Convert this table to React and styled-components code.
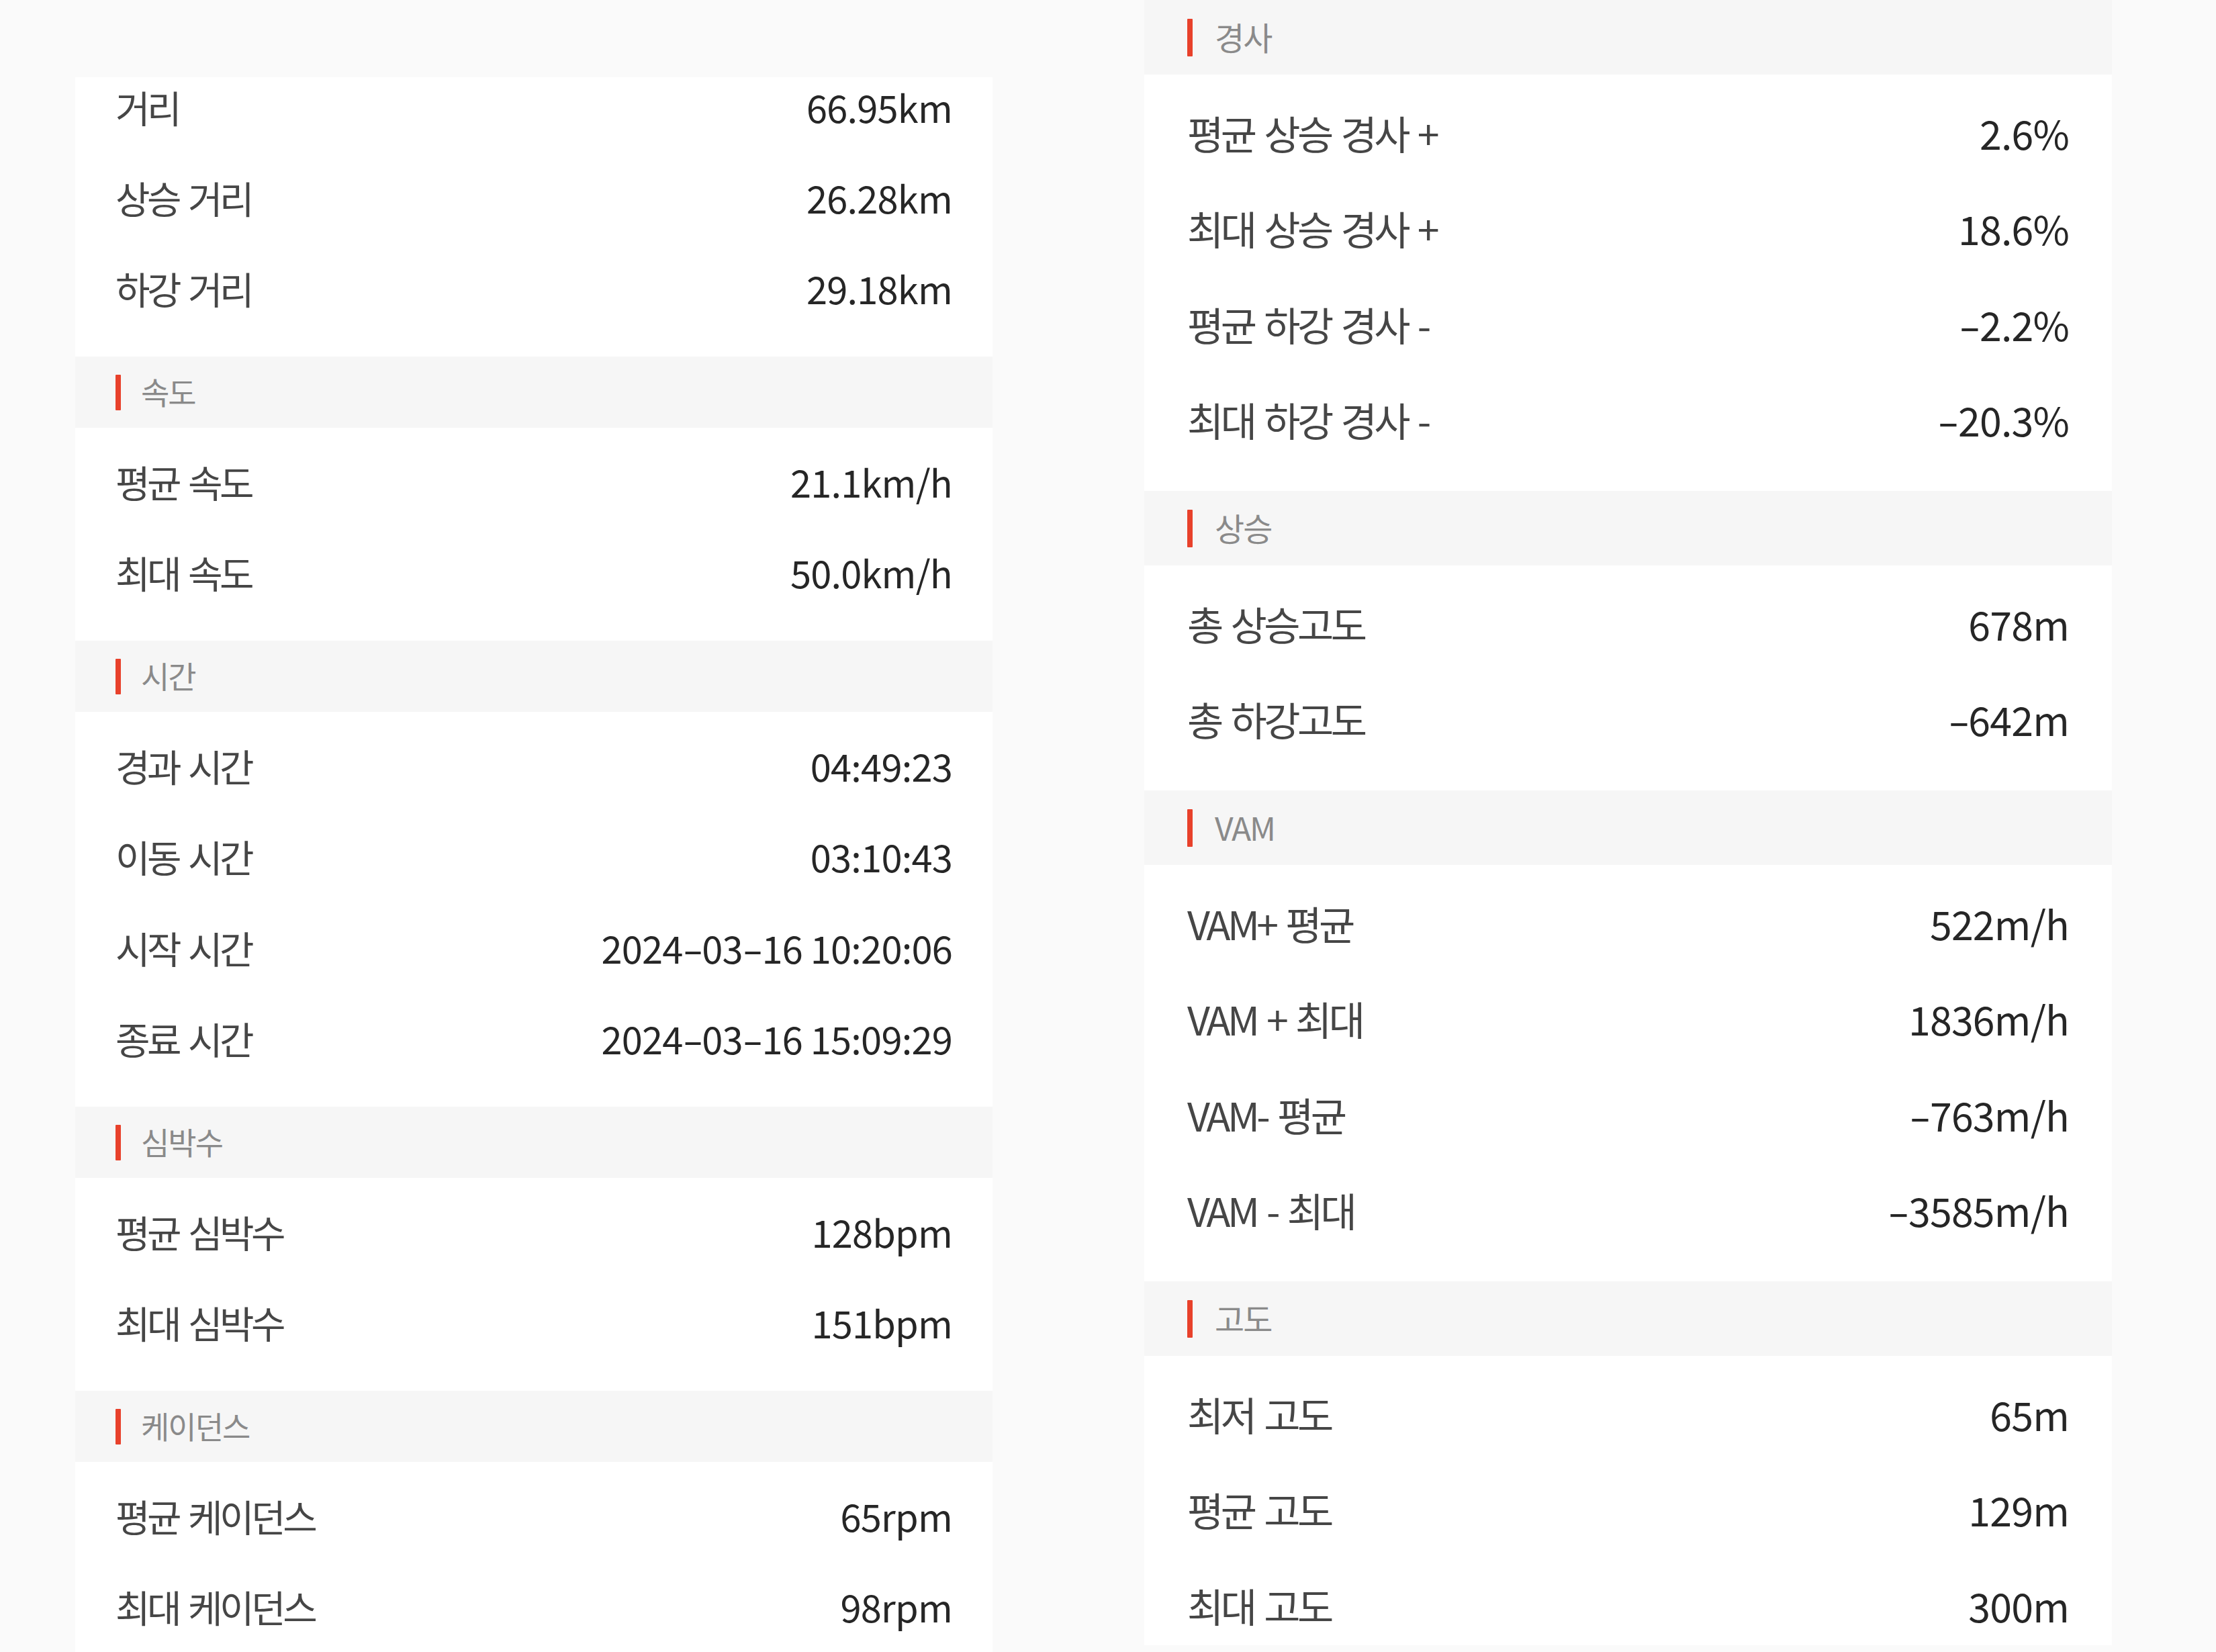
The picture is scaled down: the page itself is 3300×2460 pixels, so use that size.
import React from "react";
import styled, { createGlobalStyle, ThemeProvider } from "styled-components";

const GlobalStyle = createGlobalStyle`
  html, body {
    margin: 0;
    padding: 0;
    background: #fafafa;
  }
  body {
    font-family: "Noto Sans CJK KR", "Noto Sans", sans-serif;
  }
  #root {
    height: 2460px;
    overflow: hidden;
  }
`;

const leftTheme = {
  pad: 60,
  row: 135.5,
  head: 106,
  pt: 16,
  pb: 30,
  font: 56,
  headFont: 46,
  barW: 8,
  barH: 53,
  barGap: 30,
};

const rightTheme = {
  pad: 64,
  row: 142.5,
  head: 111,
  pt: 19,
  pb: 31,
  font: 59,
  headFont: 48,
  barW: 8,
  barH: 56,
  barGap: 33,
};

const Page = styled.div`
  display: flex;
  align-items: flex-start;
  gap: 226px;
  padding-left: 112px;
  height: 2460px;
  box-sizing: border-box;
`;

const Column = styled.div`
  display: flex;
  flex-direction: column;
  width: ${(p) => p.$width}px;
  height: ${(p) => p.$height}px;
  padding-top: ${(p) => p.$top}px;
  box-sizing: border-box;
  overflow: hidden;
  flex-shrink: 0;
`;

const SectionHeader = styled.div`
  display: flex;
  align-items: center;
  gap: ${(p) => p.theme.barGap}px;
  height: ${(p) => p.theme.head}px;
  padding-left: ${(p) => p.theme.pad}px;
  background: #f6f6f6;
  flex-shrink: 0;
`;

const Bar = styled.span`
  display: block;
  width: ${(p) => p.theme.barW}px;
  height: ${(p) => p.theme.barH}px;
  background: #e8412b;
  border-radius: 1px;
`;

const HeaderTitle = styled.span`
  font-size: ${(p) => p.theme.headFont}px;
  color: #8a8a8a;
  line-height: 1;
  letter-spacing: -2px;
  padding-bottom: 4px;
`;

const Body = styled.div`
  display: flex;
  flex-direction: column;
  background: #ffffff;
  padding: ${(p) => (p.$first ? 0 : p.theme.pt)}px ${(p) => p.theme.pad}px
    ${(p) => p.theme.pb}px;
  flex-shrink: 0;
`;

const Row = styled.div`
  display: flex;
  align-items: center;
  justify-content: space-between;
  box-sizing: border-box;
  height: ${(p) => (p.$compact ? 115 : p.theme.row)}px;
  padding-bottom: ${(p) => (p.$compact ? 28 : 8)}px;
  font-size: ${(p) => p.theme.font}px;
  line-height: 1;
`;

const Label = styled.span`
  color: #464646;
  white-space: pre;
  letter-spacing: -4.5px;
  word-spacing: 6px;
`;

const Value = styled.span`
  color: #262626;
  white-space: pre;
  letter-spacing: -0.8px;
`;

const Dash = styled.span`
  display: inline-block;
  transform: scaleX(1.6);
  margin: 0 5px;
`;

const leftSections = [
  {
    title: null,
    rows: [
      ["거리", "66.95km"],
      ["상승 거리", "26.28km"],
      ["하강 거리", "29.18km"],
    ],
  },
  {
    title: "속도",
    rows: [
      ["평균 속도", "21.1km/h"],
      ["최대 속도", "50.0km/h"],
    ],
  },
  {
    title: "시간",
    rows: [
      ["경과 시간", "04:49:23"],
      ["이동 시간", "03:10:43"],
      ["시작 시간", "2024-03-16 10:20:06"],
      ["종료 시간", "2024-03-16 15:09:29"],
    ],
  },
  {
    title: "심박수",
    rows: [
      ["평균 심박수", "128bpm"],
      ["최대 심박수", "151bpm"],
    ],
  },
  {
    title: "케이던스",
    rows: [
      ["평균 케이던스", "65rpm"],
      ["최대 케이던스", "98rpm"],
    ],
  },
];

const rightSections = [
  {
    title: "경사",
    rows: [
      ["평균 상승 경사 +", "2.6%"],
      ["최대 상승 경사 +", "18.6%"],
      ["평균 하강 경사 -", "-2.2%"],
      ["최대 하강 경사 -", "-20.3%"],
    ],
  },
  {
    title: "상승",
    rows: [
      ["총 상승고도", "678m"],
      ["총 하강고도", "-642m"],
    ],
  },
  {
    title: "VAM",
    rows: [
      ["VAM+ 평균", "522m/h"],
      ["VAM + 최대", "1836m/h"],
      ["VAM- 평균", "-763m/h"],
      ["VAM - 최대", "-3585m/h"],
    ],
  },
  {
    title: "고도",
    rows: [
      ["최저 고도", "65m"],
      ["평균 고도", "129m"],
      ["최대 고도", "300m"],
    ],
  },
];

function ValueText({ text }) {
  const parts = text.split("-");
  return (
    <Value>
      {parts.map((part, i) => (
        <React.Fragment key={i}>
          {i > 0 && <Dash>-</Dash>}
          {part}
        </React.Fragment>
      ))}
    </Value>
  );
}

function Section({ title, rows }) {
  const first = !title;
  return (
    <>
      {title && (
        <SectionHeader>
          <Bar />
          <HeaderTitle>{title}</HeaderTitle>
        </SectionHeader>
      )}
      <Body $first={first}>
        {rows.map(([label, value], i) => (
          <Row key={label} $compact={first && i === 0}>
            <Label>{label}</Label>
            <ValueText text={value} />
          </Row>
        ))}
      </Body>
    </>
  );
}

export default function App() {
  return (
    <>
      <GlobalStyle />
      <Page>
        <ThemeProvider theme={leftTheme}>
          <Column $width={1366} $height={2460} $top={115}>
            {leftSections.map((s, i) => (
              <Section key={i} {...s} />
            ))}
          </Column>
        </ThemeProvider>
        <ThemeProvider theme={rightTheme}>
          <Column $width={1441} $height={2450} $top={0}>
            {rightSections.map((s, i) => (
              <Section key={i} {...s} />
            ))}
          </Column>
        </ThemeProvider>
      </Page>
    </>
  );
}
